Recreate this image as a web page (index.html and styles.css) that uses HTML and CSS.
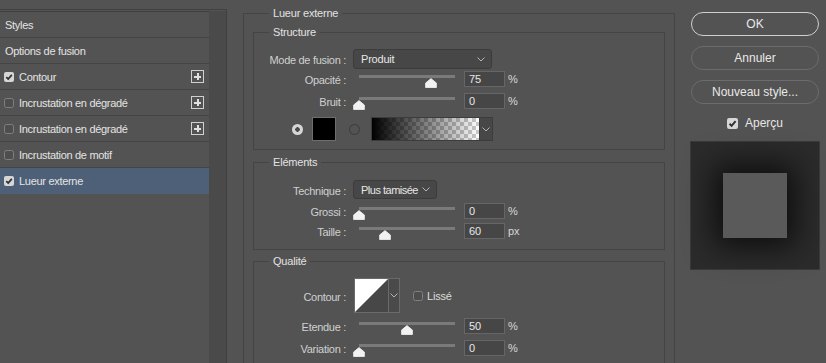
FILE: index.html
```html
<!DOCTYPE html>
<html lang="fr">
<head>
<meta charset="utf-8">
<title>Style de calque</title>
<link rel="stylesheet" href="styles.css">
</head>
<body>
<div class="app">
  <aside class="side">
    <div class="list">
      <div class="item plain">Styles</div>
      <div class="item plain">Options de fusion</div>
      <div class="item"><svg class="cb" viewBox="0 0 10 10"><rect x="0" y="0" width="10" height="10" rx="2" fill="#d6d6d6"/><path d="M2.3 5.2 L4.2 7.1 L7.8 2.9" fill="none" stroke="#2e2e2e" stroke-width="1.7"/></svg>Contour<span class="plus"></span></div>
      <div class="item"><span class="cb off"></span>Incrustation en dégradé<span class="plus"></span></div>
      <div class="item"><span class="cb off"></span>Incrustation en dégradé<span class="plus"></span></div>
      <div class="item"><span class="cb off"></span>Incrustation de motif</div>
      <div class="item sel"><svg class="cb" viewBox="0 0 10 10"><rect x="0" y="0" width="10" height="10" rx="2" fill="#d6d6d6"/><path d="M2.3 5.2 L4.2 7.1 L7.8 2.9" fill="none" stroke="#2e2e2e" stroke-width="1.7"/></svg>Lueur externe</div>
    </div>
    <div class="scroll"></div>
  </aside>

  <main class="panel">
    <section class="group outer">
      <div class="gtitle">Lueur externe</div>

      <section class="group inner g-structure">
        <div class="gtitle">Structure</div>
        <div class="row h20 mt10">
          <span class="lbl">Mode de fusion :</span>
          <div class="select sel-mode"><span>Produit</span><svg class="chev" viewBox="0 0 8 5"><path d="M0.5 0.5 L4 4 L7.5 0.5" fill="none" stroke="#b5b5b5" stroke-width="1"/></svg></div>
        </div>
        <div class="row h16 mt2">
          <span class="lbl">Opacité :</span>
          <div class="slider"><div class="track"></div><svg class="thumb" style="left:75%" viewBox="0 0 12 10"><path d="M6 0.6 L11.4 5 V9.5 H0.6 V5 Z" fill="#f2f2f2" stroke="#f2f2f2" stroke-width="0.8" stroke-linejoin="round"/></svg></div>
          <div class="num">75</div><span class="unit">%</span>
        </div>
        <div class="row h16 mt6">
          <span class="lbl">Bruit :</span>
          <div class="slider"><div class="track"></div><svg class="thumb" style="left:0%" viewBox="0 0 12 10"><path d="M6 0.6 L11.4 5 V9.5 H0.6 V5 Z" fill="#f2f2f2" stroke="#f2f2f2" stroke-width="0.8" stroke-linejoin="round"/></svg></div>
          <div class="num">0</div><span class="unit">%</span>
        </div>
        <div class="row colors mt8">
          <span class="radio on"></span>
          <span class="swatch"></span>
          <span class="radio off"></span>
          <div class="grad"><span class="grad-fill"></span><span class="drop"><svg class="chev" viewBox="0 0 8 5"><path d="M0.5 0.5 L4 4 L7.5 0.5" fill="none" stroke="#b5b5b5" stroke-width="1"/></svg></span></div>
        </div>
      </section>

      <section class="group inner g-elements">
        <div class="gtitle">Eléments</div>
        <div class="row h19 mt11">
          <span class="lbl">Technique :</span>
          <div class="select sel-tech"><span>Plus tamisée</span><svg class="chev" viewBox="0 0 8 5"><path d="M0.5 0.5 L4 4 L7.5 0.5" fill="none" stroke="#b5b5b5" stroke-width="1"/></svg></div>
        </div>
        <div class="row h16 mt4">
          <span class="lbl">Grossi :</span>
          <div class="slider"><div class="track"></div><svg class="thumb" style="left:0%" viewBox="0 0 12 10"><path d="M6 0.6 L11.4 5 V9.5 H0.6 V5 Z" fill="#f2f2f2" stroke="#f2f2f2" stroke-width="0.8" stroke-linejoin="round"/></svg></div>
          <div class="num">0</div><span class="unit">%</span>
        </div>
        <div class="row h16 mt4">
          <span class="lbl">Taille :</span>
          <div class="slider"><div class="track"></div><svg class="thumb" style="left:27%" viewBox="0 0 12 10"><path d="M6 0.6 L11.4 5 V9.5 H0.6 V5 Z" fill="#f2f2f2" stroke="#f2f2f2" stroke-width="0.8" stroke-linejoin="round"/></svg></div>
          <div class="num">60</div><span class="unit">px</span>
        </div>
      </section>

      <section class="group inner g-quality">
        <div class="gtitle">Qualité</div>
        <div class="row h35 mt10">
          <span class="lbl">Contour :</span>
          <div class="curve">
            <svg class="curve-img" viewBox="0 0 33 33"><rect width="33" height="33" fill="#474747"/><path d="M0 0 H33 L0 33 Z" fill="#ffffff"/></svg>
            <span class="drop"><svg class="chev" viewBox="0 0 8 5"><path d="M0.5 0.5 L4 4 L7.5 0.5" fill="none" stroke="#b5b5b5" stroke-width="1"/></svg></span>
          </div>
          <span class="cb off lisse-cb"></span><span class="lisse">Lissé</span>
        </div>
        <div class="row h16 mt5">
          <span class="lbl">Etendue :</span>
          <div class="slider"><div class="track"></div><svg class="thumb" style="left:50%" viewBox="0 0 12 10"><path d="M6 0.6 L11.4 5 V9.5 H0.6 V5 Z" fill="#f2f2f2" stroke="#f2f2f2" stroke-width="0.8" stroke-linejoin="round"/></svg></div>
          <div class="num">50</div><span class="unit">%</span>
        </div>
        <div class="row h16 mt6">
          <span class="lbl">Variation :</span>
          <div class="slider"><div class="track"></div><svg class="thumb" style="left:0%" viewBox="0 0 12 10"><path d="M6 0.6 L11.4 5 V9.5 H0.6 V5 Z" fill="#f2f2f2" stroke="#f2f2f2" stroke-width="0.8" stroke-linejoin="round"/></svg></div>
          <div class="num">0</div><span class="unit">%</span>
        </div>
      </section>
    </section>
  </main>

  <div class="actions">
    <button class="btn primary">OK</button>
    <button class="btn">Annuler</button>
    <button class="btn">Nouveau style...</button>
    <div class="apercu"><svg class="cb" viewBox="0 0 10 10"><rect x="0" y="0" width="10" height="10" rx="2" fill="#d6d6d6"/><path d="M2.3 5.2 L4.2 7.1 L7.8 2.9" fill="none" stroke="#2e2e2e" stroke-width="1.7"/></svg><span>Aperçu</span></div>
    <div class="preview"><div class="square"></div></div>
  </div>
</div>
</body>
</html>
```

FILE: styles.css
```css
* { box-sizing: border-box; }
html, body {
  margin: 0;
  padding: 0;
  background: #535353;
  overflow: hidden;
}
body {
  font-family: "Liberation Sans", Arial, sans-serif;
  font-size: 11px;
  color: #dcdcdc;
  width: 826px;
  height: 363px;
}
.app {
  display: flex;
  align-items: flex-start;
  height: 363px;
}

/* left list */
.side {
  width: 227px;
  height: 354px;
  margin-top: 9px;
  border-top: 1px solid #404040;
  border-right: 1px solid #404040;
  display: flex;
  align-items: stretch;
  flex-shrink: 0;
}
.list {
  width: 209px;
  margin-top: 1px;
  border-top: 1px solid #3e3e3e;
  background: #535353;
}
.scroll {
  width: 17px;
  margin-top: 1px;
  background: #4a4a4a;
}
.item {
  height: 26px;
  border-bottom: 1px solid #444444;
  display: flex;
  align-items: center;
  padding: 0 5px 0 4px;
  color: #e4e4e4;
  letter-spacing: -0.3px;
  white-space: nowrap;
}
.item.plain { padding-left: 5px; }
.item.sel { background: #4d6078; border-bottom-color: #4d6078; }
.cb {
  width: 10px;
  height: 10px;
  flex-shrink: 0;
  margin-right: 5px;
  display: block;
}
.cb.off {
  border: 1px solid #808080;
  border-radius: 2.5px;
  background: #4e4e4e;
}
.plus {
  margin-left: auto;
  width: 13px;
  height: 13px;
  border: 1px solid #d0d0d0;
  position: relative;
  flex-shrink: 0;
}
.plus::before, .plus::after {
  content: "";
  position: absolute;
  background: #e0e0e0;
}
.plus::before { left: 2px; right: 2px; top: 4.5px; height: 2px; }
.plus::after { top: 2px; bottom: 2px; left: 4.5px; width: 2px; }

/* main panel */
.panel {
  margin-left: 16px;
  width: 432px;
  flex-shrink: 0;
}
.group {
  border: 1px solid #444444;
}
.outer {
  margin-top: 13px;
  padding: 0 8px 0 9px;
  height: 400px;
}
.gtitle {
  margin-top: -8px;
  height: 14px;
  line-height: 14px;
  width: max-content;
  padding: 0 4px;
  background: #535353;
  color: #e2e2e2;
  letter-spacing: -0.2px;
}
.outer > .gtitle { margin-left: 16px; }
.inner > .gtitle { margin-left: 15px; }
.inner { width: 412px; }
.g-structure { margin-top: 12px; padding-bottom: 8px; }
.g-elements { margin-top: 12px; padding-bottom: 10px; }
.g-quality { margin-top: 11px; padding-bottom: 30px; }

.row {
  display: flex;
  align-items: center;
}
.h16 { height: 16px; }
.h19 { height: 19px; }
.h20 { height: 20px; }
.h35 { height: 35px; }
.mt2 { margin-top: 2px; }
.mt4 { margin-top: 4px; }
.mt5 { margin-top: 5px; }
.mt6 { margin-top: 6px; }
.mt8 { margin-top: 8px; }
.mt10 { margin-top: 10px; }
.mt11 { margin-top: 11px; }

.lbl {
  width: 92px;
  text-align: right;
  color: #d0d0d0;
  letter-spacing: -0.3px;
  white-space: nowrap;
  padding-top: 2px;
  flex-shrink: 0;
}
.select {
  margin-left: 7px;
  height: 100%;
  background: #474747;
  border: 1px solid #3c3c3c;
  border-radius: 3px;
  display: flex;
  align-items: center;
  padding: 0 6px 0 7px;
  color: #e6e6e6;
}
.select span { flex: 1; letter-spacing: -0.2px; white-space: nowrap; }
.sel-mode { width: 139px; }
.sel-tech { width: 84px; }
.sel-tech span { letter-spacing: -0.5px; }
.chev { width: 8px; height: 5px; display: block; }

.slider {
  margin-left: 13px;
  width: 96px;
  height: 16px;
  position: relative;
  flex-shrink: 0;
}
.track {
  margin-top: 4px;
  height: 3px;
  background: #7a7a7a;
}
.thumb {
  position: absolute;
  top: 7px;
  width: 12px;
  height: 10px;
  margin-left: -6px;
}
.num {
  margin-left: 9px;
  width: 41px;
  height: 16px;
  background: #464646;
  border: 1px solid #666666;
  color: #e8e8e8;
  padding-left: 4px;
  line-height: 14px;
  flex-shrink: 0;
}
.unit {
  margin-left: 3px;
  color: #d8d8d8;
}

.colors { height: 24px; }
.radio {
  width: 11px;
  height: 11px;
  border-radius: 50%;
  flex-shrink: 0;
}
.radio.on {
  margin-left: 38px;
  background: radial-gradient(circle, #4a4a4a 0 2px, #d6d6d6 2.5px);
}
.radio.off {
  margin-left: 13px;
  border: 1px solid #3a3a3a;
}
.swatch {
  margin-left: 9px;
  width: 24px;
  height: 24px;
  background: #000;
  border: 1px solid #6e6e6e;
  flex-shrink: 0;
}
.grad {
  margin-left: 11px;
  width: 122px;
  height: 24px;
  display: flex;
  border: 1px solid #3c3c3c;
}
.grad-fill {
  flex: 1;
  background:
    linear-gradient(to right, #000 0%, rgba(0,0,0,0) 100%),
    conic-gradient(#c9c9c9 25%, #ffffff 0 50%, #c9c9c9 0 75%, #ffffff 0);
  background-size: 100% 100%, 8px 8px;
}
.drop {
  width: 13px;
  background: #474747;
  border-left: 1px solid #3c3c3c;
  display: flex;
  align-items: center;
  justify-content: center;
}

.curve {
  margin-left: 8px;
  height: 35px;
  width: 46px;
  display: flex;
  border: 1px solid #6a6a6a;
  flex-shrink: 0;
}
.curve-img { width: 33px; height: 33px; display: block; }
.curve .drop { width: 11px; border-left: 1px solid #6a6a6a; background: #4a4a4a; }
.lisse-cb { margin-left: 13px; margin-right: 4px; }
.lisse { color: #dcdcdc; letter-spacing: -0.2px; }

/* right column */
.actions {
  margin-left: 16px;
  width: 128px;
  padding-top: 12px;
  display: flex;
  flex-direction: column;
  flex-shrink: 0;
}
.btn {
  height: 24px;
  border-radius: 12px;
  border: 1px solid #6c6c6c;
  background: transparent;
  color: #e8e8e8;
  font-family: "Liberation Sans", Arial, sans-serif;
  font-size: 12px;
  padding: 0;
  margin-bottom: 10px;
}
.btn.primary { border: 1.5px solid #cfcfcf; }
.apercu {
  margin-top: 2px;
  height: 14px;
  display: flex;
  align-items: center;
  justify-content: center;
  color: #e6e6e6;
  font-size: 12px;
}
.apercu .cb { width: 11px; height: 11px; margin-right: 7px; }
.preview {
  margin-top: 11px;
  margin-left: -1px;
  width: 130px;
  height: 129px;
  background: #2b2b2b;
  border: 1px solid #3a3a3a;
  display: flex;
  align-items: center;
  justify-content: center;
}
.square {
  width: 64px;
  height: 65px;
  background: #5a5a5a;
  box-shadow: 0 0 30px 8px rgba(0,0,0,0.7);
}
```
